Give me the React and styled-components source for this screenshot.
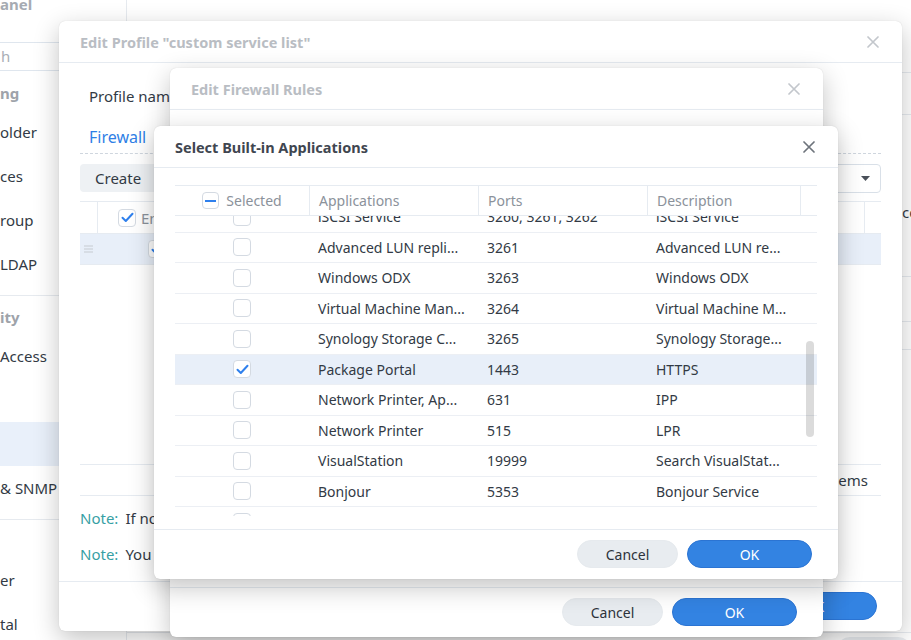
import React from "react";
import styled, { createGlobalStyle } from "styled-components";

const GlobalStyle = createGlobalStyle`
  html, body { margin: 0; padding: 0; }
  body {
    font-family: "Noto Sans", "Open Sans", sans-serif;
    background: #fff;
    overflow: hidden;
  }
  * { box-sizing: border-box; }
`;

const Desktop = styled.div`
  position: relative;
  width: 911px;
  height: 640px;
  overflow: hidden;
  background: #fff;
  color: #323a45;
`;

/* ---------- background control panel ---------- */

const BackWindow = styled.div`
  position: absolute;
  left: 0;
  top: 0;
  width: 911px;
  height: 690px;
  display: grid;
  grid-template-columns: 127px 1fr;
  background: #fff;
`;

const Sidebar = styled.aside`
  display: flex;
  flex-direction: column;
  border-right: 1px solid #e6eaef;
  font-size: 15px;
`;

const WinTitle = styled.div`
  height: 28px;
  margin-top: -10px;
  line-height: 28px;
  font-weight: 700;
  color: #a6abb2;
`;

const Search = styled.div`
  margin: 24px 0 5px -20px;
  height: 29px;
  border: 1px solid #dfe6ee;
  border-radius: 4px;
  padding-left: 20px;
  line-height: 27px;
  color: #a9aeb5;
`;

const SectionHead = styled.div`
  height: 34px;
  line-height: 34px;
  font-weight: 700;
  color: #9ea3aa;
`;

const NavItem = styled.div`
  height: 44px;
  line-height: 44px;
  color: #323a45;
  background: ${(p) => (p.$active ? "#e9f0fa" : "transparent")};
  white-space: nowrap;
`;

const NavSep = styled.div`
  margin: 9px 0 4px;
  border-top: 1px solid #e6eaef;
`;

const MainPane = styled.main`
  display: flex;
  flex-direction: column;
`;

const MainRow = styled.div`
  height: ${(p) => p.$h}px;
  padding: ${(p) => p.$pt || 0}px 0 0 775px;
  border-bottom: ${(p) => (p.$line ? "1px solid #e6eaef" : "none")};
  font-size: 15px;
  line-height: 22px;
  white-space: nowrap;
`;

const MainFooter = styled.div`
  margin-top: auto;
  height: 58px;
  border-top: 1px solid #e6eaef;
  display: flex;
  justify-content: flex-end;
  padding: 4px 6px 0 0;
`;

const GreyPill = styled.div`
  width: 76px;
  height: 28px;
  border-radius: 14px;
  background: #e9ecf0;
`;

/* ---------- dialogs ---------- */

const Dialog = styled.section`
  position: absolute;
  left: ${(p) => p.$x}px;
  top: ${(p) => p.$y}px;
  width: ${(p) => p.$w}px;
  height: ${(p) => p.$h}px;
  background: #fff;
  border-radius: 6px;
  box-shadow: 0 8px 26px rgba(0, 0, 0, 0.24), 0 0 1px rgba(0, 0, 0, 0.18);
  display: flex;
  flex-direction: column;
  overflow: hidden;
`;

const DialogHead = styled.header`
  height: 42px;
  flex: none;
  display: flex;
  align-items: center;
  justify-content: space-between;
  padding: 0 23px 0 21px;
  border-bottom: 1px solid #e6ebf1;
`;

const DialogTitle = styled.h2`
  margin: 0;
  font-size: 14.5px;
  font-weight: 700;
  color: ${(p) => (p.$dim ? "#b9bdc3" : "#3f4650")};
  white-space: nowrap;
`;

const DialogFoot = styled.footer`
  flex: none;
  display: flex;
  justify-content: flex-end;
  gap: 9px;
  padding: 10px ${(p) => p.$pr || 26}px 11px 0;
  border-top: 1px solid #e6ebf1;
`;

const Button = styled.button`
  height: 28px;
  width: ${(p) => (p.$primary ? 125 : 101)}px;
  border-radius: 14px;
  border: 1px solid ${(p) => (p.$primary ? "#2b74d3" : "#e6eaee")};
  background: ${(p) => (p.$primary ? "#3383e2" : "#e8ecf0")};
  color: ${(p) => (p.$primary ? "#fff" : "#2d333b")};
  font-family: inherit;
  font-size: 14px;
  padding: 0;
`;

const CloseIcon = ({ dim }) => (
  <svg width="12" height="12" viewBox="0 0 12 12">
    <path
      d="M1 1 L11 11 M11 1 L1 11"
      stroke={dim ? "#c3c7cc" : "#6e747c"}
      strokeWidth="1.7"
      strokeLinecap="round"
    />
  </svg>
);

const Box = styled.span`
  display: inline-flex;
  align-items: center;
  justify-content: center;
  width: ${(p) => p.$size}px;
  height: ${(p) => p.$size}px;
  flex: none;
  border: 1px solid #d4dae2;
  border-radius: 4px;
  background: #fff;
`;

const Checkbox = ({ state = "off", size = 18 }) => (
  <Box $size={size}>
    {state === "on" && (
      <svg width="13" height="11" viewBox="0 0 13 11">
        <path
          d="M1.5 5.8 L4.8 9 L11.5 1.8"
          fill="none"
          stroke="#2f80ed"
          strokeWidth="2"
          strokeLinecap="round"
          strokeLinejoin="round"
        />
      </svg>
    )}
    {state === "mixed" && (
      <svg width="11" height="2" viewBox="0 0 11 2">
        <rect width="11" height="2" fill="#2f80ed" />
      </svg>
    )}
  </Box>
);

/* ---------- Edit Profile dialog content ---------- */

const ProfileBody = styled.div`
  flex: 1;
  display: flex;
  flex-direction: column;
  padding: 18px 21px 0;
  font-size: 15px;
  min-height: 0;
`;

const FormRow = styled.div`
  height: 30px;
  line-height: 30px;
  padding-left: 9px;
  white-space: nowrap;
`;

const TabRow = styled.div`
  height: 43px;
  display: flex;
  align-items: flex-end;
  padding: 0 0 5px 9px;
  border-bottom: 1px dashed #cfd6de;
  font-size: 16px;
  line-height: 22px;
  color: #2f7fe6;
`;

const Toolbar = styled.div`
  margin-top: 10px;
  height: 28px;
  display: flex;
  justify-content: space-between;
`;

const GreyButton = styled.div`
  height: 28px;
  padding: 0 15px;
  width: 90px;
  border-radius: 4px;
  background: #eef1f4;
  line-height: 28px;
`;

const Dropdown = styled.div`
  width: 200px;
  height: 29px;
  border: 1px solid #d9e0e8;
  border-radius: 4px;
  display: flex;
  align-items: center;
  justify-content: flex-end;
  padding-right: 10px;
`;

const RuleTable = styled.div`
  margin-top: 9px;
  flex: 1;
  display: flex;
  flex-direction: column;
  border-top: 1px solid #e6ebf1;
`;

const RuleGrid = styled.div`
  display: grid;
  grid-template-columns: 17px 120px 1fr 1fr 1fr 17px;
  height: ${(p) => p.$h}px;
  border-bottom: 1px solid #e6ebf1;
  background: ${(p) => (p.$sel ? "#e8eff9" : "transparent")};
  color: ${(p) => (p.$head ? "#8b929b" : "inherit")};
`;

const RuleCell = styled.div`
  display: flex;
  align-items: center;
  justify-content: ${(p) => (p.$center ? "center" : "flex-start")};
  gap: 5px;
  padding-left: ${(p) => (p.$center ? 0 : p.$pl ?? 9)}px;
  border-left: ${(p) => (p.$sep ? "1px solid #e6ebf1" : "none")};
  white-space: nowrap;
  overflow: hidden;
`;

const RuleSpacer = styled.div`
  flex: 1;
  border-bottom: 1px solid #e6ebf1;
`;

const RuleStatus = styled.div`
  height: 31px;
  line-height: 30px;
  text-align: right;
  padding-right: 13px;
  border-bottom: 1px solid #e6ebf1;
`;

const Notes = styled.div`
  padding: 11px 0 16px;
  display: flex;
  flex-direction: column;
  gap: 14px;
`;

const NoteLine = styled.div`
  line-height: 22px;
  white-space: nowrap;
`;

const NoteTag = styled.span`
  color: #37a0a4;
  margin-right: 7px;
`;

const Handle = () => (
  <svg width="9" height="8" viewBox="0 0 9 8">
    <path d="M0 1 H9 M0 4 H9 M0 7 H9" stroke="#c6cbd1" strokeWidth="1" />
  </svg>
);

/* ---------- Select Built-in Applications ---------- */

const SelectBody = styled.div`
  flex: 1;
  padding: 17px 21px 13px;
  font-size: 14px;
`;

const COLS = "134px 169px 169px 153px 17px";

const HeadRow = styled.div`
  display: grid;
  grid-template-columns: ${COLS};
  height: 31px;
  border-top: 1px solid #e6ebf1;
  border-bottom: 1px solid #e6ebf1;
  color: #8b929b;
`;

const HeadCell = styled.div`
  display: flex;
  align-items: center;
  justify-content: ${(p) => (p.$center ? "center" : "flex-start")};
  gap: 7px;
  padding-left: ${(p) => (p.$center ? 0 : 9)}px;
  border-left: ${(p) => (p.$sep ? "1px solid #e6ebf1" : "none")};
`;

const Viewport = styled.div`
  position: relative;
  height: 300px;
  overflow: hidden;
`;

const List = styled.div`
  margin-top: -14px;
`;

const AppRow = styled.div`
  display: grid;
  grid-template-columns: ${COLS};
  height: 30.5px;
  border-bottom: 1px solid #eceff4;
  background: ${(p) => (p.$sel ? "#e8eff9" : "transparent")};
`;

const AppCell = styled.div`
  display: flex;
  align-items: center;
  justify-content: ${(p) => (p.$center ? "center" : "flex-start")};
  padding-left: ${(p) => (p.$center ? 0 : 9)}px;
  white-space: nowrap;
  overflow: hidden;
`;

const ScrollThumb = styled.div`
  position: absolute;
  right: 3px;
  top: 125px;
  width: 8px;
  height: 96px;
  border-radius: 4px;
  background: rgba(0, 0, 0, 0.14);
`;

const apps = [
  ["iSCSI Service", "3260, 3261, 3262", "iSCSI Service"],
  ["Advanced LUN repli...", "3261", "Advanced LUN re..."],
  ["Windows ODX", "3263", "Windows ODX"],
  ["Virtual Machine Man...", "3264", "Virtual Machine M..."],
  ["Synology Storage C...", "3265", "Synology Storage..."],
  ["Package Portal", "1443", "HTTPS", true],
  ["Network Printer, Ap...", "631", "IPP"],
  ["Network Printer", "515", "LPR"],
  ["VisualStation", "19999", "Search VisualStat..."],
  ["Bonjour", "5353", "Bonjour Service"],
  ["", "", ""],
];

export default function App() {
  return (
    <Desktop>
      <GlobalStyle />

      <BackWindow>
        <Sidebar>
          <WinTitle>anel</WinTitle>
          <Search>h</Search>
          <SectionHead>ng</SectionHead>
          <NavItem>older</NavItem>
          <NavItem>ces</NavItem>
          <NavItem>roup</NavItem>
          <NavItem>LDAP</NavItem>
          <NavSep />
          <SectionHead>ity</SectionHead>
          <NavItem>Access</NavItem>
          <NavItem />
          <NavItem $active />
          <NavItem>&amp; SNMP</NavItem>
          <NavSep />
          <SectionHead />
          <NavItem>er</NavItem>
          <NavItem>tal</NavItem>
        </Sidebar>
        <MainPane>
          <MainRow $h={73} $line />
          <MainRow $h={42} $line />
          <MainRow $h={162} $pt={86} $line>
            co
          </MainRow>
          <MainRow $h={45} $line />
          <MainRow $h={28} $line />
          <MainFooter>
            <GreyPill />
          </MainFooter>
        </MainPane>
      </BackWindow>

      <Dialog $x={59} $y={21} $w={843} $h={610}>
        <DialogHead>
          <DialogTitle $dim>Edit Profile "custom service list"</DialogTitle>
          <CloseIcon dim />
        </DialogHead>
        <ProfileBody>
          <FormRow>Profile name</FormRow>
          <TabRow>Firewall</TabRow>
          <Toolbar>
            <GreyButton>Create</GreyButton>
            <Dropdown>
              <svg width="9" height="5" viewBox="0 0 9 5">
                <path d="M0 0 H9 L4.5 5 Z" fill="#4a5059" />
              </svg>
            </Dropdown>
          </Toolbar>
          <RuleTable>
            <RuleGrid $h={32} $head>
              <RuleCell />
              <RuleCell $sep $pl={20}>
                <Checkbox state="on" />
                En
              </RuleCell>
              <RuleCell $sep />
              <RuleCell $sep />
              <RuleCell $sep />
              <RuleCell $sep />
            </RuleGrid>
            <RuleGrid $h={31} $sel>
              <RuleCell $center>
                <Handle />
              </RuleCell>
              <RuleCell $center>
                <Checkbox state="on" />
              </RuleCell>
              <RuleCell />
              <RuleCell />
              <RuleCell />
              <RuleCell />
            </RuleGrid>
            <RuleSpacer />
            <RuleStatus>ems</RuleStatus>
          </RuleTable>
          <Notes>
            <NoteLine>
              <NoteTag>Note:</NoteTag>If no
            </NoteLine>
            <NoteLine>
              <NoteTag>Note:</NoteTag>You
            </NoteLine>
          </Notes>
        </ProfileBody>
        <DialogFoot $pr={25}>
          <Button>Cancel</Button>
          <Button $primary>OK</Button>
        </DialogFoot>
      </Dialog>

      <Dialog $x={170} $y={68} $w={653} $h={569}>
        <DialogHead>
          <DialogTitle $dim>Edit Firewall Rules</DialogTitle>
          <CloseIcon dim />
        </DialogHead>
        <SelectBody />
        <DialogFoot>
          <Button>Cancel</Button>
          <Button $primary>OK</Button>
        </DialogFoot>
      </Dialog>

      <Dialog $x={154} $y={126} $w={684} $h={453}>
        <DialogHead>
          <DialogTitle>Select Built-in Applications</DialogTitle>
          <CloseIcon />
        </DialogHead>
        <SelectBody>
          <HeadRow>
            <HeadCell $center>
              <Checkbox state="mixed" size={17} />
              Selected
            </HeadCell>
            <HeadCell $sep>Applications</HeadCell>
            <HeadCell $sep>Ports</HeadCell>
            <HeadCell $sep>Description</HeadCell>
            <HeadCell $sep />
          </HeadRow>
          <Viewport>
            <List>
              {apps.map(([name, ports, desc, sel], i) => (
                <AppRow key={i} $sel={sel}>
                  <AppCell $center>
                    <Checkbox state={sel ? "on" : "off"} />
                  </AppCell>
                  <AppCell>{name}</AppCell>
                  <AppCell>{ports}</AppCell>
                  <AppCell>{desc}</AppCell>
                  <AppCell />
                </AppRow>
              ))}
            </List>
            <ScrollThumb />
          </Viewport>
        </SelectBody>
        <DialogFoot>
          <Button>Cancel</Button>
          <Button $primary>OK</Button>
        </DialogFoot>
      </Dialog>
    </Desktop>
  );
}
